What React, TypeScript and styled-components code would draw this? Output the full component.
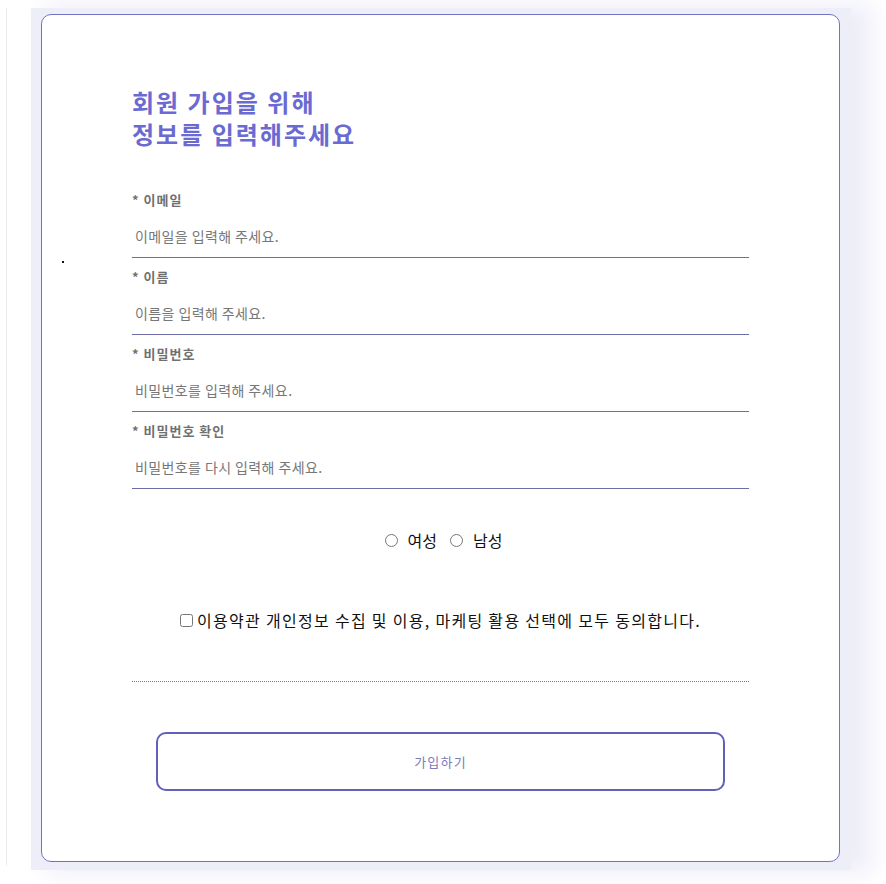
import React from "react";
import styled, { createGlobalStyle } from "styled-components";

const GlobalStyle = createGlobalStyle`
  html, body { margin: 0; padding: 0; background: #ffffff; }
  body { font-family: "Noto Sans CJK KR", "Noto Sans", sans-serif; }
  * { box-sizing: border-box; }
`;

const Page = styled.div`
  display: flex;
  align-items: flex-start;
  padding-top: 8px;
  width: 886px;
  height: 884px;
  overflow: hidden;
`;

const Rule = styled.div`
  width: 1px;
  height: 858px;
  margin-left: 6px;
  background: #ececec;
  flex-shrink: 0;
`;

const Backdrop = styled.div`
  position: relative;
  margin-left: 24px;
  width: 820px;
  height: 862px;
  padding: 6px 10px 8px 10px;
  background: #eeeef9;
  box-shadow: 18px 0 22px 4px #eeeef9;
  flex-shrink: 0;
`;

const Speck = styled.span`
  position: absolute;
  left: 31px;
  top: 253px;
  width: 2px;
  height: 2px;
  background: #111;
`;

const Card = styled.form`
  width: 799px;
  height: 848px;
  background: #ffffff;
  border: 1px solid #7373c6;
  border-radius: 10px;
  padding: 0 90px;
  display: flex;
  flex-direction: column;
`;

const Title = styled.h1`
  margin: 71px 0 31px 0;
  font-size: 24px;
  line-height: 32px;
  font-weight: 700;
  letter-spacing: 2px;
  color: #6a6ad2;
`;

const Field = styled.div`
  display: flex;
  flex-direction: column;
  padding-top: 9px;
`;

const Label = styled.label`
  font-size: 13px;
  line-height: 20px;
  font-weight: 700;
  letter-spacing: 1px;
  color: #707070;
`;

const Input = styled.input`
  height: 48px;
  width: 100%;
  padding: 5px 3px 0 3px;
  border: none;
  border-bottom: 1px solid #6c6ca6;
  outline: none;
  font-family: "Noto Sans CJK KR", "Noto Sans", sans-serif;
  font-size: 14px;
  letter-spacing: 0.4px;
  background: transparent;
  color: #333;
  &::placeholder { color: #777777; }
`;

const RadioRow = styled.div`
  margin-top: 39px;
  height: 24px;
  padding-left: 6px;
  display: flex;
  justify-content: center;
  align-items: center;
  gap: 13px;
`;

const Option = styled.label`
  display: flex;
  align-items: center;
  gap: 10px;
  font-size: 16px;
  line-height: 24px;
  color: #111;
`;

const Radio = styled.input`
  margin: 0;
  width: 13px;
  height: 13px;
`;

const AgreeRow = styled.label`
  margin-top: 56px;
  height: 24px;
  display: flex;
  justify-content: center;
  align-items: center;
  gap: 4px;
  font-size: 16px;
  line-height: 24px;
  letter-spacing: 1.3px;
  color: #111;
`;

const Check = styled.input`
  margin: 0;
  width: 13px;
  height: 13px;
`;

const Dotted = styled.hr`
  margin: 49px 0 0 0;
  border: none;
  border-top: 1px dotted #7a7a7a;
  height: 0;
`;

const Submit = styled.button`
  margin: 50px 24px 0 24px;
  height: 59px;
  border: 2px solid #6161b9;
  border-radius: 10px;
  background: #ffffff;
  font-family: "Noto Sans CJK KR", "Noto Sans", sans-serif;
  font-size: 13px;
  letter-spacing: 1.2px;
  color: #7b7bbb;
  cursor: pointer;
`;

const fields = [
  { label: "* 이메일", placeholder: "이메일을 입력해 주세요.", type: "email" },
  { label: "* 이름", placeholder: "이름을 입력해 주세요.", type: "text" },
  { label: "* 비밀번호", placeholder: "비밀번호를 입력해 주세요.", type: "password" },
  { label: "* 비밀번호 확인", placeholder: "비밀번호를 다시 입력해 주세요.", type: "password" },
];

export default function App() {
  return (
    <>
      <GlobalStyle />
      <Page>
        <Rule />
        <Backdrop>
          <Speck />
          <Card onSubmit={(e) => e.preventDefault()}>
            <Title>
              회원 가입을 위해
              <br />
              정보를 입력해주세요
            </Title>
            {fields.map((f) => (
              <Field key={f.label}>
                <Label>{f.label}</Label>
                <Input type={f.type} placeholder={f.placeholder} />
              </Field>
            ))}
            <RadioRow>
              <Option>
                <Radio type="radio" name="gender" value="f" />
                여성
              </Option>
              <Option>
                <Radio type="radio" name="gender" value="m" />
                남성
              </Option>
            </RadioRow>
            <AgreeRow>
              <Check type="checkbox" />
              이용약관 개인정보 수집 및 이용, 마케팅 활용 선택에 모두 동의합니다.
            </AgreeRow>
            <Dotted />
            <Submit type="submit">가입하기</Submit>
          </Card>
        </Backdrop>
      </Page>
    </>
  );
}
